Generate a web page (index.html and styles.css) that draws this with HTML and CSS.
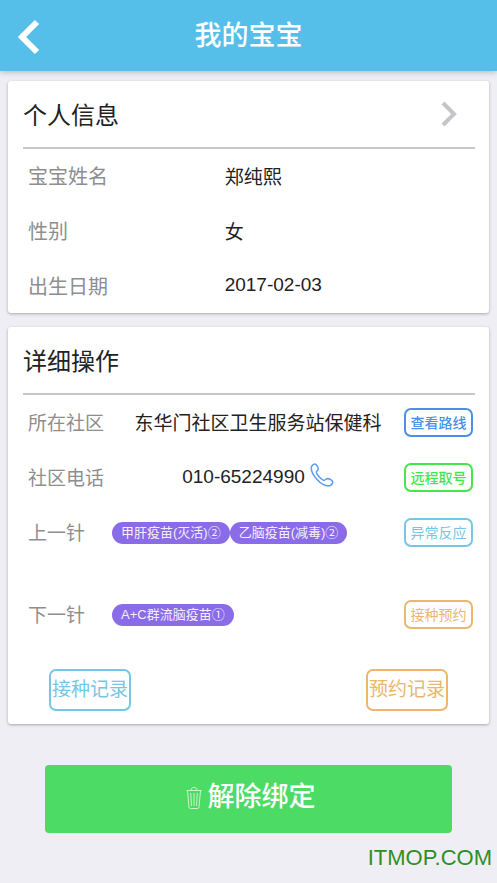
FILE: index.html
```html
<!DOCTYPE html>
<html lang="zh-CN">
<head>
<meta charset="utf-8">
<meta name="viewport" content="width=device-width, initial-scale=1">
<title>我的宝宝</title>
<link rel="stylesheet" href="styles.css">
</head>
<body>
<header class="topbar">
  <button class="back" type="button" aria-label="返回">
    <svg width="24" height="36" viewBox="0 0 24 36" fill="none" stroke="currentColor" stroke-width="6"><path d="M21 3 L6 18 L21 33"/></svg>
  </button>
  <h1>我的宝宝</h1>
</header>
<main>
  <section class="card">
    <a class="card-title" href="#profile">
      <h2>个人信息</h2>
      <svg width="18" height="28" viewBox="0 0 18 28" fill="none" stroke="currentColor" stroke-width="4"><path d="M3 3 L14 14 L3 25"/></svg>
    </a>
    <dl class="info">
      <div class="info-row"><dt>宝宝姓名</dt><dd>郑纯熙</dd></div>
      <div class="info-row"><dt>性别</dt><dd>女</dd></div>
      <div class="info-row"><dt>出生日期</dt><dd>2017-02-03</dd></div>
    </dl>
  </section>

  <section class="card">
    <div class="card-title"><h2>详细操作</h2></div>
    <div class="row">
      <span class="label">所在社区</span>
      <span class="value">东华门社区卫生服务站保健科</span>
      <button class="pill blue" type="button">查看路线</button>
    </div>
    <div class="row">
      <span class="label">社区电话</span>
      <a class="value" href="tel:010-65224990">010-65224990
        <svg class="phone" width="24" height="28" viewBox="0 0 24 28" fill="none" stroke="currentColor" stroke-width="1.5" stroke-linejoin="round"><path d="M1.5 3.5 C2.5 1.8 4.6 .6 5.8 1.3 C7.2 2.3 8.2 4.4 8.2 6 C8.1 7.5 6.2 8 6.3 9.4 C7.2 12.4 11 16.2 13.7 17.4 C15.3 17.6 16 15.5 17.7 15.5 C19.5 15.7 22 17.3 22.7 18.7 C23.2 20.2 21.4 22.2 19.8 22.7 C15.8 23.4 10.5 20.1 7 16.4 C3.8 13 .6 7.5 1.5 3.5 Z"/></svg>
      </a>
      <button class="pill green" type="button">远程取号</button>
    </div>
    <div class="row previous">
      <span class="label">上一针</span>
      <span class="tags"><span class="tag">甲肝疫苗(灭活)②</span><span class="tag">乙脑疫苗(减毒)②</span></span>
      <button class="pill sky" type="button">异常反应</button>
    </div>
    <div class="row">
      <span class="label">下一针</span>
      <span class="tags"><span class="tag">A+C群流脑疫苗①</span></span>
      <button class="pill orange" type="button">接种预约</button>
    </div>
    <div class="records">
      <button class="record sky" type="button">接种记录</button>
      <button class="record orange" type="button">预约记录</button>
    </div>
  </section>

  <button class="unbind" type="button">
    <svg width="16" height="23" viewBox="0 0 16 23" fill="none" stroke="currentColor" stroke-width="1"><path d="M.5 4.5 H15.5 M5 4 C5 .5 11 .5 11 4 M1.5 5 L3 21 Q3 22.5 4.500 22.500 H11.500 Q13 22.500 13 21 L14.500 5 M4.700 7 L5.500 20 M8 7 V20 M11.300 7 L10.500 20"/></svg>
    <span>解除绑定</span>
  </button>
</main>
<footer class="site">ITMOP.COM</footer>
</body>
</html>
```
FILE: styles.css
```css
* {
  box-sizing: border-box;
}

body {
  margin: 0;
  background: #efeef4;
  color: #222;
  font-family: "Liberation Sans", "Noto Sans CJK SC", sans-serif;
  font-size: 19px;
}

h1, h2, dl, dd {
  margin: 0;
}

a {
  color: inherit;
  text-decoration: none;
}

button {
  padding: 0;
  border: 0;
  background: none;
  font-family: inherit;
  cursor: pointer;
}

svg {
  display: block;
  flex: none;
}

.topbar {
  display: grid;
  grid-template-columns: 48px 1fr 48px;
  align-items: center;
  height: 71px;
  background: #55bfea;
  color: #fff;
  box-shadow: 0 1px 6px rgba(0, 0, 0, 0.25);
}

.topbar h1 {
  font-size: 27px;
  line-height: 40px;
  font-weight: 500;
  text-align: center;
}

.back {
  padding: 3px 0 0 16px;
  color: #fff;
}

main {
  padding: 10px 8px 0;
}

.card {
  margin-bottom: 14px;
  padding: 0 14px 0 15px;
  border-radius: 3px;
  background: #fff;
  box-shadow: 0 1px 3px rgba(0, 0, 0, 0.3);
}

.card-title {
  display: flex;
  align-items: center;
  justify-content: space-between;
  height: 68px;
  padding-right: 17px;
  border-bottom: 2px solid #c8c8c8;
}

.card-title h2 {
  padding-top: 4px;
  font-size: 24px;
  line-height: 36px;
  font-weight: 400;
}

.card-title svg {
  color: #c4c4ca;
}

.info-row {
  display: grid;
  grid-template-columns: 44% 1fr;
  align-items: center;
  height: 55px;
  padding: 0 0 2px 5px;
}

.info-row:last-child {
  height: 54px;
}

.info-row dt {
  color: #8e8e8e;
  font-size: 20px;
}

.row {
  display: grid;
  grid-template-columns: 84px 1fr 69px;
  align-items: center;
  height: 55px;
  padding: 0 2px 0 5px;
}

.previous {
  margin-bottom: 27px;
}

.label,
.value {
  padding-bottom: 2px;
}

.label {
  color: #8e8e8e;
}

.value {
  display: flex;
  align-items: center;
  justify-content: center;
  gap: 5px;
  white-space: nowrap;
}

.phone {
  color: #5a9cf0;
}

.tags {
  display: flex;
}

.tag {
  padding: 0 9px;
  border-radius: 11px;
  background: #8a6be8;
  color: #f4efff;
  font-size: 13px;
  line-height: 22px;
  white-space: nowrap;
}

.pill {
  height: 29px;
  border: 2px solid;
  border-radius: 7px;
  font-size: 14px;
  line-height: 20px;
}

.record {
  width: 82px;
  height: 42px;
  border: 2px solid;
  border-radius: 7px;
  font-size: 19px;
  line-height: 28px;
}

.blue {
  color: #4a8fea;
  font-weight: 500;
}

.green {
  color: #45e54c;
  font-weight: 500;
}

.sky {
  color: #74c7e8;
}

.orange {
  color: #ecb66c;
}

.records {
  display: flex;
  justify-content: space-between;
  padding: 27px 27px 13px 26px;
}

.unbind {
  display: flex;
  align-items: center;
  justify-content: center;
  gap: 6px;
  width: calc(100% - 74px);
  height: 68px;
  margin: 41px auto 0;
  padding: 0 0 4px 4px;
  border-radius: 4px;
  background: #4cdb64;
  color: #fff;
  font-size: 27px;
  line-height: 40px;
  font-weight: 500;
}

.unbind svg {
  opacity: 0.7;
}

.site {
  padding: 12px 5px 0 0;
  color: #2f8f22;
  font-size: 22px;
  line-height: 26px;
  text-align: right;
}
```
